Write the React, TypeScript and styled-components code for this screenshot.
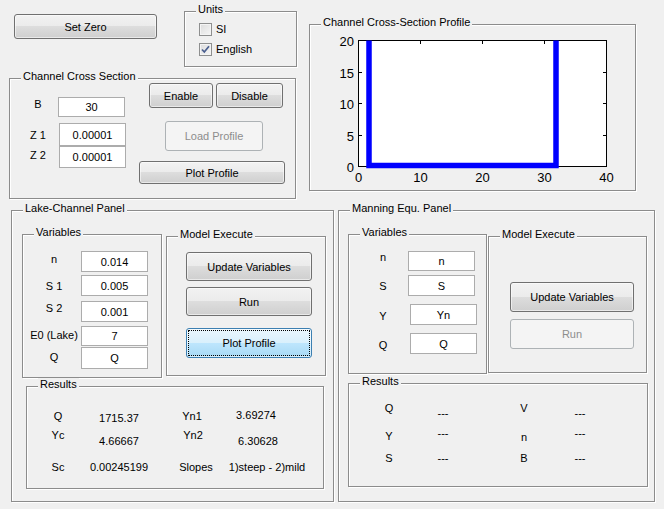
import React from 'react';
import styled, { createGlobalStyle } from 'styled-components';

const GlobalStyle = createGlobalStyle`
  html, body {
    margin: 0;
    padding: 0;
    background: #f0f0f0;
  }
  body {
    font-family: "Liberation Sans", Arial, sans-serif;
    font-size: 11px;
    color: #000;
  }
  *, *::before, *::after {
    box-sizing: border-box;
  }
`;

type Val = { text: string; dx?: number; dy?: number };

const lakeVars = [
  { label: 'n', value: '0.014', mt: 0, h: 21, dy: -3 },
  { label: 'S 1', value: '0.005', mt: 3, h: 21, dy: 0 },
  { label: 'S 2', value: '0.001', mt: 5, h: 21, dy: -4 },
  { label: 'E0 (Lake)', value: '7', mt: 4, h: 20, dy: -1 },
  { label: 'Q', value: 'Q', mt: 1, h: 22, dy: -1 },
];

const manningVars = [
  { label: 'n', value: 'n', mt: 0, h: 20, dy: -4, ml: 0 },
  { label: 'S', value: 'S', mt: 4, h: 21, dy: 0, ml: 0 },
  { label: 'Y', value: 'Yn', mt: 8, h: 21, dy: 1, ml: 2 },
  { label: 'Q', value: 'Q', mt: 8, h: 21, dy: 1, ml: 2 },
];

const lakeResults: Val[][] = [
  [{ text: 'Q', dy: -1 }, { text: '1715.37', dy: 1 }, { text: 'Yn1', dy: -1 }, { text: '3.69274', dx: -2, dy: -2 }],
  [{ text: 'Yc', dy: -3 }, { text: '4.66667', dy: 3 }, { text: 'Yn2', dx: 1, dy: -3 }, { text: '6.30628', dy: 3 }],
  [{ text: 'Sc' }, { text: '0.00245199' }, { text: 'Slopes', dx: 4 }, { text: '1)steep - 2)mild', dx: 9 }],
];

const manningResults: Val[][] = [
  [{ text: 'Q', dy: -2 }, { text: '---', dy: 3 }, { text: 'V', dy: -2 }, { text: '---', dy: 3 }],
  [{ text: 'Y', dy: 3 }, { text: '---' }, { text: 'n', dy: 4 }, { text: '---' }],
  [{ text: 'S' }, { text: '---' }, { text: 'B' }, { text: '---' }],
];

const Chart: React.FC = () => {
  const xv = (v: number) => Math.round(48 + v * 6.2) + 0.5;
  const yv = (v: number) => Math.round(141 - v * 6.3) + 0.5;
  return (
    <ChartSvg width="325" height="165">
      <rect x="48.5" y="15.5" width="248" height="126" fill="#fff" stroke="#000" />
      {[0, 5, 10, 15, 20].map(v => (
        <g key={'y' + v}>
          <line x1="48.5" x2="52" y1={yv(v)} y2={yv(v)} stroke="#000" />
          <line x1="296.5" x2="293" y1={yv(v)} y2={yv(v)} stroke="#000" />
          <text x="44" y={yv(v) + 5} textAnchor="end">{v}</text>
        </g>
      ))}
      {[0, 10, 20, 30, 40].map(v => (
        <g key={'x' + v}>
          <line x1={xv(v)} x2={xv(v)} y1="141.5" y2="138" stroke="#000" />
          <line x1={xv(v)} x2={xv(v)} y1="15.5" y2="19" stroke="#000" />
          <text x={xv(v)} y="157" textAnchor="middle">{v}</text>
        </g>
      ))}
      <path d="M59 15.5 V140.5 H246 V15.5" fill="none" stroke="#0000ff" strokeWidth="5.5" strokeLinejoin="miter" />
    </ChartSvg>
  );
};

const CheckBox: React.FC<{ checked?: boolean }> = ({ checked }) => (
  <Box>
    {checked && (
      <svg width="11" height="11" viewBox="0 0 11 11">
        <path d="M2 5.5 L4.3 8 L9 2.2" fill="none" stroke="#4a5f8f" strokeWidth="1.7" />
      </svg>
    )}
  </Box>
);

const App: React.FC = () => {
  return (
    <Window>
      <GlobalStyle />
      <TopArea>
        <LeftStack>
          <TopRow>
            <SetZero $w={143} $h={25}>Set Zero</SetZero>
            <UnitsPanel $w={113} $h={56}>
              <PanelTitle>Units</PanelTitle>
              <CheckRow><CheckBox />SI</CheckRow>
              <CheckRow><CheckBox checked />English</CheckRow>
            </UnitsPanel>
          </TopRow>
          <CrossPanel $w={287} $h={121}>
            <PanelTitle>Channel Cross Section</PanelTitle>
            <CrossFields>
              <VarRow>
                <VarLabel $w={48} $pl={8} $dy={-3}>B</VarLabel>
                <ValueBox $h={20}>30</ValueBox>
              </VarRow>
              <VarRow $mt={6}>
                <VarLabel $w={48} $pl={8}>Z 1</VarLabel>
                <ValueBox $h={23} $ml={1}>0.00001</ValueBox>
              </VarRow>
              <VarRow>
                <VarLabel $w={48} $pl={8} $dy={-2}>Z 2</VarLabel>
                <ValueBox $h={22} $ml={1}>0.00001</ValueBox>
              </VarRow>
            </CrossFields>
            <CrossButtons>
              <ButtonPair>
                <Button $w={64} $h={25}>Enable</Button>
                <Button $w={67} $h={25}>Disable</Button>
              </ButtonPair>
              <LoadProfile $w={98} $h={30} disabled>Load Profile</LoadProfile>
              <PlotProfile $w={146} $h={23}>Plot Profile</PlotProfile>
            </CrossButtons>
          </CrossPanel>
        </LeftStack>
        <ChartPanel $w={327} $h={167}>
          <PanelTitle>Channel Cross-Section Profile</PanelTitle>
          <Chart />
        </ChartPanel>
      </TopArea>

      <BottomArea>
        <LakePanel $w={323} $h={292}>
          <PanelTitle>Lake-Channel Panel</PanelTitle>
          <SubRow>
            <VarsPanel $w={140} $h={144}>
              <PanelTitle>Variables</PanelTitle>
              {lakeVars.map(v => (
                <VarRow key={v.label} $mt={v.mt}>
                  <VarLabel $w={58} $pl={4} $dy={v.dy}>{v.label}</VarLabel>
                  <ValueBox $h={v.h}>{v.value}</ValueBox>
                </VarRow>
              ))}
            </VarsPanel>
            <LakeExec $w={160} $h={140}>
              <PanelTitle>Model Execute</PanelTitle>
              <Button $w={126} $h={29}>Update Variables</Button>
              <Button $w={126} $h={29} $mt={6}>Run</Button>
              <Button $w={126} $h={30} $mt={12} $focus>Plot Profile</Button>
            </LakeExec>
          </SubRow>
          <ResultsPanel $w={298} $h={103} $ml={4} $mt={8} $pt={22} $pl={0}
            $cols="62px 60px 86px 46px" $rows="16px 26px 32px">
            <PanelTitle>Results</PanelTitle>
            {lakeResults.flat().map((c, i) => (
              <Cell key={i} $dx={c.dx} $dy={c.dy}>{c.text}</Cell>
            ))}
          </ResultsPanel>
        </LakePanel>

        <ManningPanel $w={317} $h={292}>
          <PanelTitle>Manning Equ. Panel</PanelTitle>
          <SubRow>
            <VarsPanel $w={139} $h={140}>
              <PanelTitle>Variables</PanelTitle>
              {manningVars.map(v => (
                <VarRow key={v.label} $mt={v.mt}>
                  <VarLabel $w={59} $pl={9} $dy={v.dy}>{v.label}</VarLabel>
                  <ValueBox $h={v.h} $ml={v.ml}>{v.value}</ValueBox>
                </VarRow>
              ))}
            </VarsPanel>
            <ManningExec $w={159} $h={137}>
              <PanelTitle>Model Execute</PanelTitle>
              <Button $w={124} $h={30}>Update Variables</Button>
              <Button $w={124} $h={30} $mt={7} disabled>Run</Button>
            </ManningExec>
          </SubRow>
          <ResultsPanel $w={300} $h={104} $ml={0} $mt={9} $pt={18} $pl={20}
            $cols="40px 68px 94px 18px" $rows="16px 30px 20px">
            <PanelTitle>Results</PanelTitle>
            {manningResults.flat().map((c, i) => (
              <Cell key={i} $dx={c.dx} $dy={c.dy}>{c.text}</Cell>
            ))}
          </ResultsPanel>
        </ManningPanel>
      </BottomArea>
    </Window>
  );
};

export default App;

const Window = styled.div`
  width: 664px;
  height: 509px;
  overflow: hidden;
  background: #f0f0f0;
  display: flex;
  flex-direction: column;
`;

const TopArea = styled.div`
  display: flex;
  align-items: flex-start;
  height: 199px;
  padding-left: 9px;
`;

const LeftStack = styled.div`
  display: flex;
  flex-direction: column;
  width: 287px;
  flex: none;
`;

const TopRow = styled.div`
  display: flex;
  align-items: flex-start;
  height: 67px;
`;

const BottomArea = styled.div`
  display: flex;
  align-items: flex-start;
  gap: 4px;
  margin-top: 11px;
  padding-left: 11px;
`;

const Panel = styled.div<{ $w: number; $h: number }>`
  position: relative;
  flex: none;
  width: ${p => p.$w}px;
  height: ${p => p.$h}px;
  border: 1px solid #8c8c8c;
  box-shadow: 1px 1px 0 #fff, inset 1px 1px 0 #fff;
`;

const PanelTitle = styled.span`
  position: absolute;
  top: -9px;
  left: 11px;
  padding: 0 2px;
  line-height: 13px;
  background: #f0f0f0;
  white-space: nowrap;
`;

const UnitsPanel = styled(Panel)`
  margin: 11px 0 0 27px;
  padding: 11px 0 0 14px;
  display: flex;
  flex-direction: column;
  gap: 7px;
`;

const CheckRow = styled.div`
  display: flex;
  align-items: center;
  gap: 4px;
  height: 13px;
  line-height: 13px;
`;

const Box = styled.span`
  width: 13px;
  height: 13px;
  flex: none;
  border: 1px solid #8e8f8f;
  background: linear-gradient(135deg, #dcdcdc 0%, #f6f6f6 100%);
  box-shadow: inset 0 0 0 1px #f4f4f4;
  display: flex;
  align-items: center;
  justify-content: center;
`;

const CrossPanel = styled(Panel)`
  margin-top: 11px;
  padding-top: 4px;
  display: flex;
  align-items: flex-start;
`;

const CrossFields = styled.div`
  display: flex;
  flex-direction: column;
  width: 116px;
  margin-top: 14px;
`;

const CrossButtons = styled.div`
  display: flex;
  flex-direction: column;
  align-items: flex-start;
  margin-left: 13px;
`;

const ButtonPair = styled.div`
  display: flex;
  gap: 3px;
  margin-left: 10px;
`;

const ChartPanel = styled(Panel)`
  margin: 24px 0 0 13px;
`;

const ChartSvg = styled.svg`
  display: block;
  font-family: "Liberation Sans", Arial, sans-serif;
  font-size: 13px;
`;

const LakePanel = styled(Panel)`
  padding: 23px 0 0 10px;
`;

const ManningPanel = styled(Panel)`
  padding: 23px 0 0 9px;
`;

const SubRow = styled.div`
  display: flex;
  align-items: flex-start;
`;

const VarsPanel = styled(Panel)`
  padding-top: 16px;
  display: flex;
  flex-direction: column;
`;

const LakeExec = styled(Panel)`
  margin: 2px 0 0 4px;
  padding: 15px 0 0 19px;
  display: flex;
  flex-direction: column;
  align-items: flex-start;
`;

const ManningExec = styled(Panel)`
  margin: 2px 0 0 1px;
  padding: 45px 0 0 21px;
  display: flex;
  flex-direction: column;
  align-items: flex-start;
`;

const VarRow = styled.div<{ $mt?: number }>`
  display: flex;
  align-items: center;
  margin-top: ${p => p.$mt ?? 0}px;
`;

const VarLabel = styled.div<{ $w: number; $pl: number; $dy?: number }>`
  flex: none;
  width: ${p => p.$w}px;
  padding-left: ${p => p.$pl}px;
  text-align: center;
  white-space: nowrap;
  line-height: 12px;
  margin-bottom: ${p => ((p.$dy ?? 0) < 0 ? -2 * (p.$dy ?? 0) : 0)}px;
  margin-top: ${p => ((p.$dy ?? 0) > 0 ? 2 * (p.$dy ?? 0) : 0)}px;
`;

const ValueBox = styled.div<{ $h: number; $ml?: number }>`
  flex: none;
  width: 67px;
  height: ${p => p.$h}px;
  margin-left: ${p => p.$ml ?? 0}px;
  background: #fff;
  border: 1px solid #acacac;
  display: flex;
  align-items: center;
  justify-content: center;
  white-space: nowrap;
`;

const ResultsPanel = styled(Panel)<{
  $ml: number;
  $mt: number;
  $pt: number;
  $pl: number;
  $cols: string;
  $rows: string;
}>`
  margin: ${p => p.$mt}px 0 0 ${p => p.$ml}px;
  padding: ${p => p.$pt}px 0 0 ${p => p.$pl}px;
  display: grid;
  grid-template-columns: ${p => p.$cols};
  grid-template-rows: ${p => p.$rows};
  align-content: start;
`;

const Cell = styled.div<{ $dx?: number; $dy?: number }>`
  display: flex;
  justify-content: center;
  align-items: center;
  white-space: nowrap;
  line-height: 13px;
  padding: ${p => ((p.$dy ?? 0) > 0 ? 2 * (p.$dy ?? 0) : 0)}px
    ${p => ((p.$dx ?? 0) < 0 ? -2 * (p.$dx ?? 0) : 0)}px
    ${p => ((p.$dy ?? 0) < 0 ? -2 * (p.$dy ?? 0) : 0)}px
    ${p => ((p.$dx ?? 0) > 0 ? 2 * (p.$dx ?? 0) : 0)}px;
`;

const Button = styled.button<{ $w: number; $h: number; $mt?: number; $focus?: boolean }>`
  flex: none;
  width: ${p => p.$w}px;
  height: ${p => p.$h}px;
  margin: ${p => p.$mt ?? 0}px 0 0 0;
  padding: 0;
  font: inherit;
  color: #000;
  white-space: nowrap;
  border: 1px solid ${p => (p.$focus ? '#3c7fb1' : '#707070')};
  border-radius: 3px;
  background: ${p =>
    p.$focus
      ? 'linear-gradient(#eaf6fd 0%, #d9f0fc 50%, #bee6fd 50%, #a7d9f5 100%)'
      : 'linear-gradient(#f2f2f2 0%, #ebebeb 50%, #dddddd 50%, #cfcfcf 100%)'};
  box-shadow: inset 0 0 0 1px rgba(255, 255, 255, 0.55);
  outline: ${p => (p.$focus ? '1px dotted #000' : 'none')};
  outline-offset: -3px;

  &:disabled {
    border-color: #adb2b5;
    background: #f4f4f4;
    color: #8d8d8d;
    box-shadow: none;
  }
`;

const SetZero = styled(Button)`
  margin: 14px 0 0 5px;
`;

const LoadProfile = styled(Button)`
  margin: 13px 0 0 26px;
`;

const PlotProfile = styled(Button)`
  margin-top: 10px;
`;
